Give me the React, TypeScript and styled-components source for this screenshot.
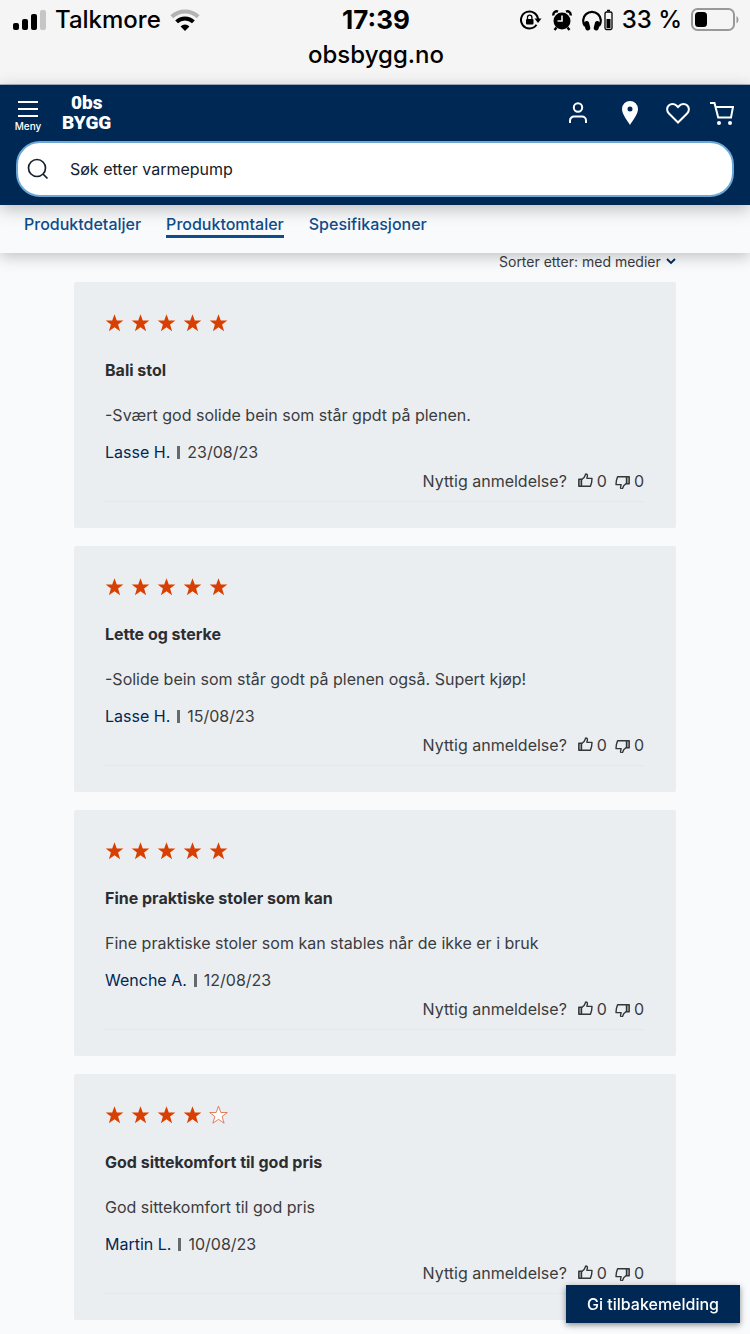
import React from "react";
import styled, { createGlobalStyle } from "styled-components";

const navy = "#002855";
const link = "#0f4c8a";

const GlobalStyle = createGlobalStyle`
  *, *::before, *::after { box-sizing: border-box; }
  body {
    margin: 0;
    background: #f9fafc;
    color: #3a3c40;
    font-family: Inter, "Liberation Sans", sans-serif;
    font-size: 16px;
    line-height: 24px;
  }
  button, input, select { font: inherit; color: inherit; }
  button { border: 0; padding: 0; background: none; cursor: pointer; }
  h2, p { margin: 0; }
  svg { display: block; flex: none; }
`;

const Page = styled.div`
  min-height: 100vh;
`;

const PhoneBar = styled.div`
  background: #f5f5f5;
  border-bottom: 1px solid #a9b4c2;
  color: #000;
  padding: 5px 11px 13px 13px;
`;

const StatusRow = styled.div`
  display: grid;
  grid-template-columns: 1fr auto 1fr;
  align-items: center;
  height: 30px;
  font-size: 24px;
  font-weight: 500;
`;

const StatusGroup = styled.div<{ $end?: boolean }>`
  display: flex;
  align-items: center;
  gap: 9px;
  justify-content: ${(p) => (p.$end ? "flex-end" : "flex-start")};
  white-space: nowrap;
`;

const DeviceIcons = styled.div`
  display: flex;
  align-items: center;
  gap: 10px;
`;

const Clock = styled.span`
  font-size: 26px;
  font-weight: 700;
`;

const Address = styled.div`
  margin-top: 4px;
  line-height: 32px;
  font-size: 24px;
  font-weight: 500;
  text-align: center;
`;

const Header = styled.header`
  position: relative;
  background: ${navy};
  color: #fff;
  padding: 8px 16px;
  box-shadow: 0 4px 16px rgba(0, 0, 0, 0.25);
  z-index: 2;
`;

const HeaderRow = styled.div`
  display: flex;
  align-items: center;
  height: 42px;
  margin-bottom: 6px;
`;

const MenuButton = styled.button`
  display: flex;
  flex-direction: column;
  align-items: center;
  gap: 3px;
  width: 24px;
  padding-top: 4px;
  font-size: 10px;
  font-weight: 500;
  line-height: 12px;
`;

const Logo = styled.a`
  display: flex;
  flex-direction: column;
  align-items: center;
  align-self: flex-start;
  margin-left: 22px;
  color: #fff;
  text-decoration: none;
  font-family: Roboto, "Liberation Sans", sans-serif;
  font-weight: 900;
  font-size: 19px;
  line-height: 20px;
`;

const Actions = styled.nav`
  display: flex;
  align-items: center;
  align-self: flex-start;
  gap: 20px;
  height: 40px;
  margin-left: auto;
`;

const ActionButton = styled.button<{ $wide?: boolean }>`
  display: flex;
  justify-content: center;
  width: ${(p) => (p.$wide ? 32 : 24)}px;
`;

const SearchBox = styled.label`
  display: flex;
  align-items: center;
  height: 56px;
  padding: 0 20px 0 9px;
  gap: 21px;
  background: #fff;
  border: 2px solid #6ba8d8;
  border-radius: 24px;
  color: #16202a;
`;

const SearchInput = styled.input`
  flex: 1;
  min-width: 0;
  border: 0;
  outline: 0;
  padding: 0;
  background: none;
`;

const Tabs = styled.nav`
  position: relative;
  display: flex;
  gap: 25px;
  height: 48px;
  padding: 8px 24px 0;
  align-items: flex-start;
  background: #f9fafc;
  box-shadow: 0 4px 14px rgba(0, 0, 0, 0.22);
  z-index: 1;
`;

const Tab = styled.a<{ $active?: boolean }>`
  color: ${link};
  font-weight: 500;
  text-decoration: none;
  border-bottom: 3px solid ${(p) => (p.$active ? link : "transparent")};
  line-height: 22px;
`;

const Reviews = styled.main`
  max-width: 1000px;
  margin: 0 auto;
  padding: 0 74px 14px;
`;

const SortRow = styled.div`
  display: flex;
  justify-content: flex-end;
  align-items: center;
  height: 17px;
  margin-bottom: 12px;
  font-size: 14px;
`;

const SortSelect = styled.select`
  appearance: none;
  border: 0;
  padding: 0;
  margin: 0 5px 0 4px;
  background: none;
`;

const CardList = styled.div`
  display: flex;
  flex-direction: column;
  gap: 18px;
`;

const Card = styled.article`
  padding: 31px 32px 26px 31px;
  background: #ebeef1;
  border-radius: 2px;
`;

const Stars = styled.div`
  display: flex;
  align-items: center;
  gap: 7px;
  height: 20px;
`;

const Title = styled.h2`
  margin-top: 25px;
  font-size: 16px;
  font-weight: 700;
  color: #2b2d30;
`;

const Body = styled.p`
  margin-top: 21px;
`;

const Meta = styled.div`
  display: flex;
  align-items: center;
  gap: 7px;
  margin-top: 13px;
`;

const Author = styled.span`
  color: ${navy};
`;

const Divider = styled.span`
  width: 3px;
  height: 13px;
  background: #66696d;
`;

const Helpful = styled.div`
  display: flex;
  justify-content: flex-end;
  align-items: center;
  gap: 8px;
  margin-top: 5px;
  padding-bottom: 8px;
  border-bottom: 1px solid #e4e8eb;
`;

const Question = styled.span`
  margin-right: 3px;
`;

const Vote = styled.button`
  display: flex;
  align-items: center;
  gap: 4px;
`;

const Feedback = styled.button`
  position: fixed;
  right: 10px;
  bottom: 11px;
  z-index: 3;
  height: 38px;
  padding: 0 21px;
  background: ${navy};
  color: #fff;
  font-weight: 500;
  box-shadow: 0 2px 6px rgba(0, 0, 0, 0.45);
`;

const STAR = "M9.500 .2l2.300 6.300h6.500l-5.200 4 2 6.700L9.500 13.300 3.900 17.200l2-6.700L.7 6.500h6.500z";

const Star = ({ filled }: { filled: boolean }) => (
  <svg width="19" height="18" viewBox="0 0 19 18" aria-hidden="true">
    <path d={STAR} fill={filled ? "#d93f00" : "#fff"} stroke="#d9623a" strokeWidth={filled ? 0 : 0.8} />
  </svg>
);

const Thumb = ({ down }: { down?: boolean }) => (
  <svg width="15" height="16" viewBox="0 0 15 16" fill="none" stroke="#333539" strokeWidth="1.4" strokeLinejoin="round" aria-hidden="true">
    <g transform={down ? "translate(0 2) rotate(180 7.5 7.5)" : undefined}>
      <path d="M.8 6.300H3.500v7H.8z" fill="#a6a9ad" />
      <path d="M3.500 6.800L6.300 4.300 7.700 1Q9.700 1 9.400 3L8.900 5.400H14L13.600 9.500 12.400 13.300H3.500" />
    </g>
  </svg>
);

const Signal = () => (
  <svg width="33" height="22" viewBox="0 0 33 22" aria-label="Signal">
    <rect x="0" y="14" width="6" height="7" rx="2" />
    <rect x="9" y="10" width="6" height="11" rx="2" />
    <rect x="18" y="5" width="6" height="16" rx="2" />
    <rect x="27" y="1" width="6" height="20" rx="2" fill="#c6c6c6" />
  </svg>
);

const Wifi = () => (
  <svg width="30" height="22" viewBox="0 0 30 22" fill="none" strokeWidth="4" aria-label="Wifi">
    <path d="M1.800 7.800a19 19 0 0 1 26.400 0" stroke="#b3b3b3" />
    <path d="M6.600 12.900a12 12 0 0 1 16.800 0" stroke="#000" />
    <path d="M15 22l-4.400-4.600a6.300 6.300 0 0 1 8.800 0z" fill="#000" />
  </svg>
);

const RotationLock = () => (
  <svg width="22" height="20" viewBox="0 0 22 20" aria-hidden="true">
    <path d="M16.500 14.800A8.500 8.500 0 1 1 18 10" fill="none" stroke="#000" strokeWidth="2" />
    <path d="M14.500 8.500H21.500L18 13z" />
    <rect x="6" y="9" width="7.500" height="5.500" rx="1" />
    <path d="M7.500 9.500V7.300a2.200 2.200 0 0 1 4.400 0v2.200" fill="none" stroke="#000" strokeWidth="1.300" />
  </svg>
);

const Alarm = () => (
  <svg width="20" height="21" viewBox="0 0 20 21" aria-hidden="true">
    <circle cx="10" cy="11" r="8.500" />
    <path d="M1.500 5.500A3.300 3.300 0 0 1 6 1.600M14 1.600a3.300 3.300 0 0 1 4.500 3.900M4.500 17.500L2.500 20M15.500 17.500l2 2.500" stroke="#000" strokeWidth="2.400" fill="none" />
    <path d="M10 5.500V11H5.500" stroke="#f5f5f5" strokeWidth="1.600" fill="none" />
  </svg>
);

const Headphones = () => (
  <svg width="31" height="22" viewBox="0 0 31 22" aria-hidden="true">
    <path d="M3 17A8.800 8.800 0 1 1 17 17" fill="none" stroke="#000" strokeWidth="2.200" />
    <rect x="2.500" y="12" width="5" height="9.500" rx="2.200" transform="rotate(-15 5 16)" />
    <rect x="12.500" y="12" width="5" height="9.500" rx="2.200" transform="rotate(15 15 16)" />
    <rect x="23" y="3" width="7" height="17.500" rx="1.500" fill="none" stroke="#000" strokeWidth="1.300" />
    <path d="M24.500 10h4v9h-4zM25 .8h3v1.500h-3z" />
  </svg>
);

const Battery = () => (
  <svg width="48" height="24" viewBox="0 0 48 24" aria-label="Batteri">
    <rect x="1" y="1" width="42" height="21" rx="5.500" fill="none" stroke="#999" strokeWidth="2" />
    <rect x="4" y="4" width="12" height="15" rx="3.500" />
    <path d="M45.500 8v7.500a4.500 4.500 0 0 0 0-7.500z" fill="#999" />
  </svg>
);

const MenuIcon = () => (
  <svg width="20" height="16" viewBox="0 0 20 16" stroke="#fff" strokeWidth="2" aria-hidden="true">
    <path d="M0 1h20M0 8h20M0 15h20" />
  </svg>
);

const ActionIcon = ({ children }: { children: React.ReactNode }) => (
  <svg width="24" height="24" viewBox="0 0 24 24" fill="none" stroke="#fff" strokeWidth="2" aria-hidden="true">
    {children}
  </svg>
);

const reviews = [
  { stars: 5, title: "Bali stol", body: "-Svært god solide bein som står gpdt på plenen.", author: "Lasse H.", date: "23/08/23" },
  { stars: 5, title: "Lette og sterke", body: "-Solide bein som står godt på plenen også. Supert kjøp!", author: "Lasse H.", date: "15/08/23" },
  { stars: 5, title: "Fine praktiske stoler som kan", body: "Fine praktiske stoler som kan stables når de ikke er i bruk", author: "Wenche A.", date: "12/08/23" },
  { stars: 4, title: "God sittekomfort til god pris", body: "God sittekomfort til god pris", author: "Martin L.", date: "10/08/23" },
];

export default function App() {
  return (
    <Page>
      <GlobalStyle />
      <PhoneBar>
        <StatusRow>
          <StatusGroup>
            <Signal />
            <span>Talkmore</span>
            <Wifi />
          </StatusGroup>
          <Clock>17:39</Clock>
          <StatusGroup $end>
            <DeviceIcons>
              <RotationLock />
              <Alarm />
              <Headphones />
            </DeviceIcons>
            <span>33 %</span>
            <Battery />
          </StatusGroup>
        </StatusRow>
        <Address>obsbygg.no</Address>
      </PhoneBar>
      <Header>
        <HeaderRow>
          <MenuButton type="button">
            <MenuIcon />
            Meny
          </MenuButton>
          <Logo href="#">
            <span>0bs</span>
            <span>BYGG</span>
          </Logo>
          <Actions>
            <ActionButton $wide type="button" aria-label="Min side">
              <ActionIcon>
                <circle cx="12" cy="6.500" r="4.200" />
                <path d="M4 22v-2.500a4 4 0 0 1 4-4h8a4 4 0 0 1 4 4V22" />
              </ActionIcon>
            </ActionButton>
            <ActionButton $wide type="button" aria-label="Butikker">
              <ActionIcon>
                <path d="M12 0a8 8 0 0 0-8 8c0 5.500 5.500 11.500 8 16 2.500-4.500 8-10.500 8-16a8 8 0 0 0-8-8zm0 5.500a2.500 2.500 0 1 1 0 5 2.500 2.500 0 0 1 0-5z" fill="#fff" stroke="none" />
              </ActionIcon>
            </ActionButton>
            <ActionButton type="button" aria-label="Favoritter">
              <ActionIcon>
                <path d="M12 21.500L2.700 12.200a5.500 5.500 0 0 1 0-7.700 5.400 5.400 0 0 1 7.700 0L12 6.100l1.600-1.600a5.400 5.400 0 0 1 7.700 0 5.500 5.500 0 0 1 0 7.700z" />
              </ActionIcon>
            </ActionButton>
            <ActionButton type="button" aria-label="Handlekurv">
              <ActionIcon>
                <path d="M0 2h4.500l3.700 14.500H21L23 6H5.500" />
                <circle cx="9" cy="22" r="2" fill="#fff" stroke="none" />
                <circle cx="20" cy="22" r="2" fill="#fff" stroke="none" />
              </ActionIcon>
            </ActionButton>
          </Actions>
        </HeaderRow>
        <SearchBox>
          <svg width="22" height="22" viewBox="0 0 22 22" fill="none" stroke="#16202a" strokeWidth="1.700" aria-hidden="true">
            <circle cx="10" cy="10" r="8.500" />
            <path d="M16 16l4.500 4.500" />
          </svg>
          <SearchInput type="search" aria-label="Søk" defaultValue="Søk etter varmepump" />
        </SearchBox>
      </Header>
      <Tabs>
        <Tab href="#detaljer">Produktdetaljer</Tab>
        <Tab href="#omtaler" $active>Produktomtaler</Tab>
        <Tab href="#spesifikasjoner">Spesifikasjoner</Tab>
      </Tabs>
      <Reviews>
        <SortRow>
          <label htmlFor="sort">Sorter etter:</label>
          <SortSelect id="sort" defaultValue="media">
            <option value="media">med medier</option>
          </SortSelect>
          <svg width="10" height="7" viewBox="0 0 10 7" fill="none" stroke={navy} strokeWidth="1.800" aria-hidden="true">
            <path d="M1 1l4 4 4-4" />
          </svg>
        </SortRow>
        <CardList>
          {reviews.map((r) => (
            <Card key={r.title}>
              <Stars role="img" aria-label={`${r.stars} av 5 stjerner`}>
                {[1, 2, 3, 4, 5].map((n) => (
                  <Star key={n} filled={n <= r.stars} />
                ))}
              </Stars>
              <Title>{r.title}</Title>
              <Body>{r.body}</Body>
              <Meta>
                <Author>{r.author}</Author>
                <Divider />
                <span>{r.date}</span>
              </Meta>
              <Helpful>
                <Question>Nyttig anmeldelse?</Question>
                <Vote type="button"><Thumb />0</Vote>
                <Vote type="button"><Thumb down />0</Vote>
              </Helpful>
            </Card>
          ))}
        </CardList>
      </Reviews>
      <Feedback type="button">Gi tilbakemelding</Feedback>
    </Page>
  );
}
